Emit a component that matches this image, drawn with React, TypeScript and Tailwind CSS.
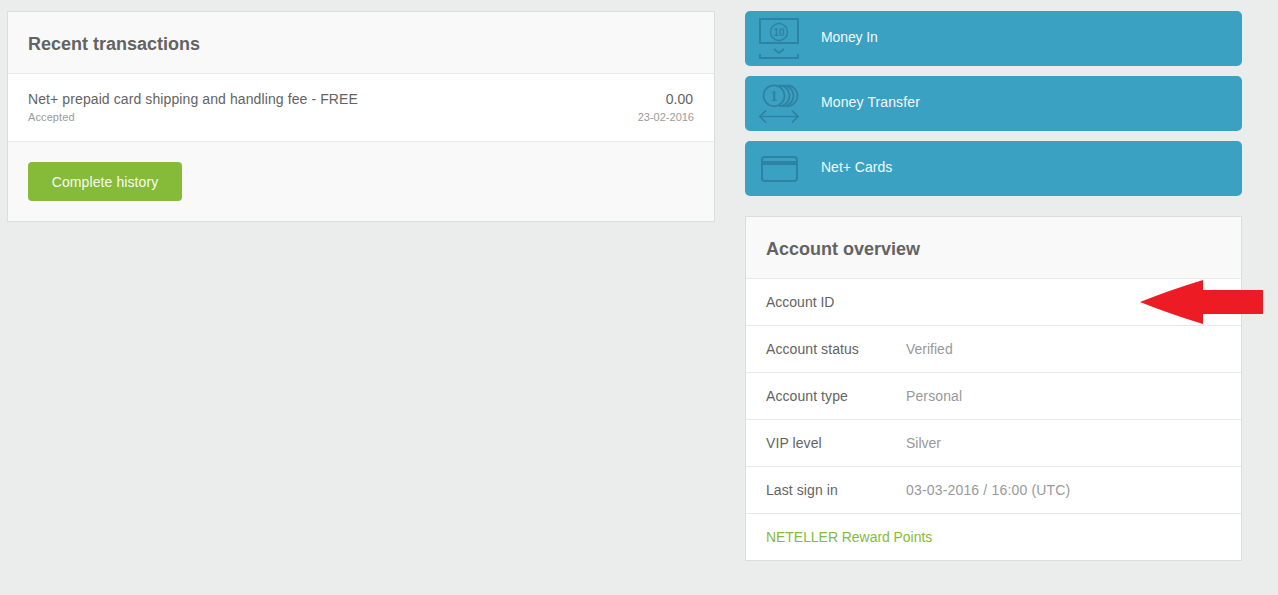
const rows = [
  { k: "Account ID", v: "", cls: "", kc: "" },
  { k: "Account status", v: "Verified", cls: "", kc: "tracking-[0.08px]" },
  { k: "Account type", v: "Personal", cls: "tracking-[0.12px]", kc: "tracking-[0.08px]" },
  { k: "VIP level", v: "Silver", cls: "", kc: "tracking-[0.08px]" },
  { k: "Last sign in", v: "03-03-2016 / 16:00 (UTC)", cls: "tracking-[0.17px]", kc: "tracking-[0.08px]" },
];

function MoneyInIcon() {
  return (
    <svg width="40" height="41" viewBox="0 0 40 41" fill="none" stroke="#2e82a2" strokeWidth="2" className="block">
      <rect x="1" y="1" width="38" height="24" />
      <circle cx="20" cy="14" r="8.500" strokeWidth="1.500" />
      <path d="M15 31l5 4 5-4M1 36v4h38v-4" />
      <text x="20" y="17.500" textAnchor="middle" fontSize="10" fontWeight="700" fill="#2e82a2" stroke="none" fontFamily="Liberation Sans, sans-serif">10</text>
    </svg>
  );
}

function TransferIcon() {
  return (
    <svg width="40" height="39" viewBox="0 0 40 39" fill="none" stroke="#2e82a2" strokeWidth="1.700" className="block">
      <path d="M20 1.300a10.500 10.500 0 0 1 0 21M24 1.300a10.500 10.500 0 0 1 0 21M28 1.300a10.500 10.500 0 0 1 0 21" />
      <circle cx="15" cy="11.800" r="10.500" />
      <text x="15" y="17" textAnchor="middle" fontSize="15" fontWeight="700" fill="#2e82a2" stroke="none" fontFamily="Liberation Serif, serif">1</text>
      <path d="M1 32.500h38M7 26.500l-6 6 6 6M33 26.500l6 6-6 6" />
    </svg>
  );
}

function CardIcon() {
  return (
    <svg width="37" height="26" viewBox="0 0 37 26" fill="none" stroke="#2e82a2" strokeWidth="2" className="ml-[2px] mt-[1px] block">
      <rect x="1" y="1" width="35" height="24" rx="3" />
      <rect x="1" y="5" width="35" height="4" fill="#2e82a2" stroke="none" />
    </svg>
  );
}

function ActionCard({ icon, label, cls }: { icon: React.ReactNode; label: string; cls: string }) {
  return (
    <div className="flex h-[55px] items-center overflow-hidden rounded-[5px] bg-[#3ba1c3] text-sm text-[#f2fafc]">
      <div className="w-[76px] shrink-0 pl-[14px]">{icon}</div>
      <span className={`pb-[4px] ${cls}`}>{label}</span>
    </div>
  );
}

export default function App() {
  return (
    <div className="flex h-[595px] items-start gap-[30px] overflow-hidden bg-[#ebedec] pl-[7px] pt-[11px] font-['Liberation_Sans',Arial,sans-serif] text-[#636363]">
      <section className="w-[708px] border border-[#dcdedd] bg-[#f9f9f9]">
        <h2 className="flex h-[61px] items-center px-5 pt-[2px] text-lg font-bold">Recent transactions</h2>
        <div className="flex h-[69px] justify-between border-y border-[#e8e8e8] bg-white px-5 pt-[17px]">
          <div>
            <div className="text-sm leading-[16px] tracking-[0.1px]">Net+ prepaid card shipping and handling fee - FREE</div>
            <div className="mt-[4px] text-[11px] leading-[13px] tracking-[0.1px] text-[#9b9b9b]">Accepted</div>
          </div>
          <div className="text-right">
            <div className="pr-[1px] text-sm leading-[16px]">0.00</div>
            <div className="mt-[4px] text-[11px] leading-[13px] text-[#9b9b9b]">23-02-2016</div>
          </div>
        </div>
        <div className="h-[79px] px-5 pt-5">
          <button className="h-[39px] w-[154px] rounded-[4px] bg-[#85bb38] text-sm tracking-[0.1px] text-[#f7fbef]">Complete history</button>
        </div>
      </section>

      <div className="relative flex w-[497px] flex-col">
        <div className="flex flex-col gap-[10px]">
          <ActionCard icon={<MoneyInIcon />} label="Money In" cls="tracking-[-0.1px]" />
          <ActionCard icon={<TransferIcon />} label="Money Transfer" cls="tracking-[0.12px]" />
          <ActionCard icon={<CardIcon />} label="Net+ Cards" cls="" />
        </div>
        <section className="mt-5 h-[345px] border border-[#dcdedd] bg-white">
          <h2 className="flex h-[61px] items-center bg-[#f9f9f9] px-5 pt-[2px] text-lg font-bold">Account overview</h2>
          {rows.map(({ k, v, cls, kc }) => (
            <div key={k} className="flex h-[47px] items-center border-t border-[#e8e8e8] px-5 text-sm">
              <span className={`w-[140px] ${kc}`}>{k}</span>
              <span className={`text-[#999999] ${cls}`}>{v}</span>
            </div>
          ))}
          <div className="flex h-[46px] items-center border-t border-[#e8e8e8] px-5 text-sm tracking-[-0.05px] text-[#85bb38]">NETELLER Reward Points</div>
        </section>
        <svg className="absolute left-[395px] top-[269px]" width="124" height="44" viewBox="0 0 124 44">
          <path d="M0 22 Q30 10 63 0 V10 H123 V34 H63 V44 Q30 34 0 22 Z" fill="#ed1c24" />
        </svg>
      </div>
    </div>
  );
}
